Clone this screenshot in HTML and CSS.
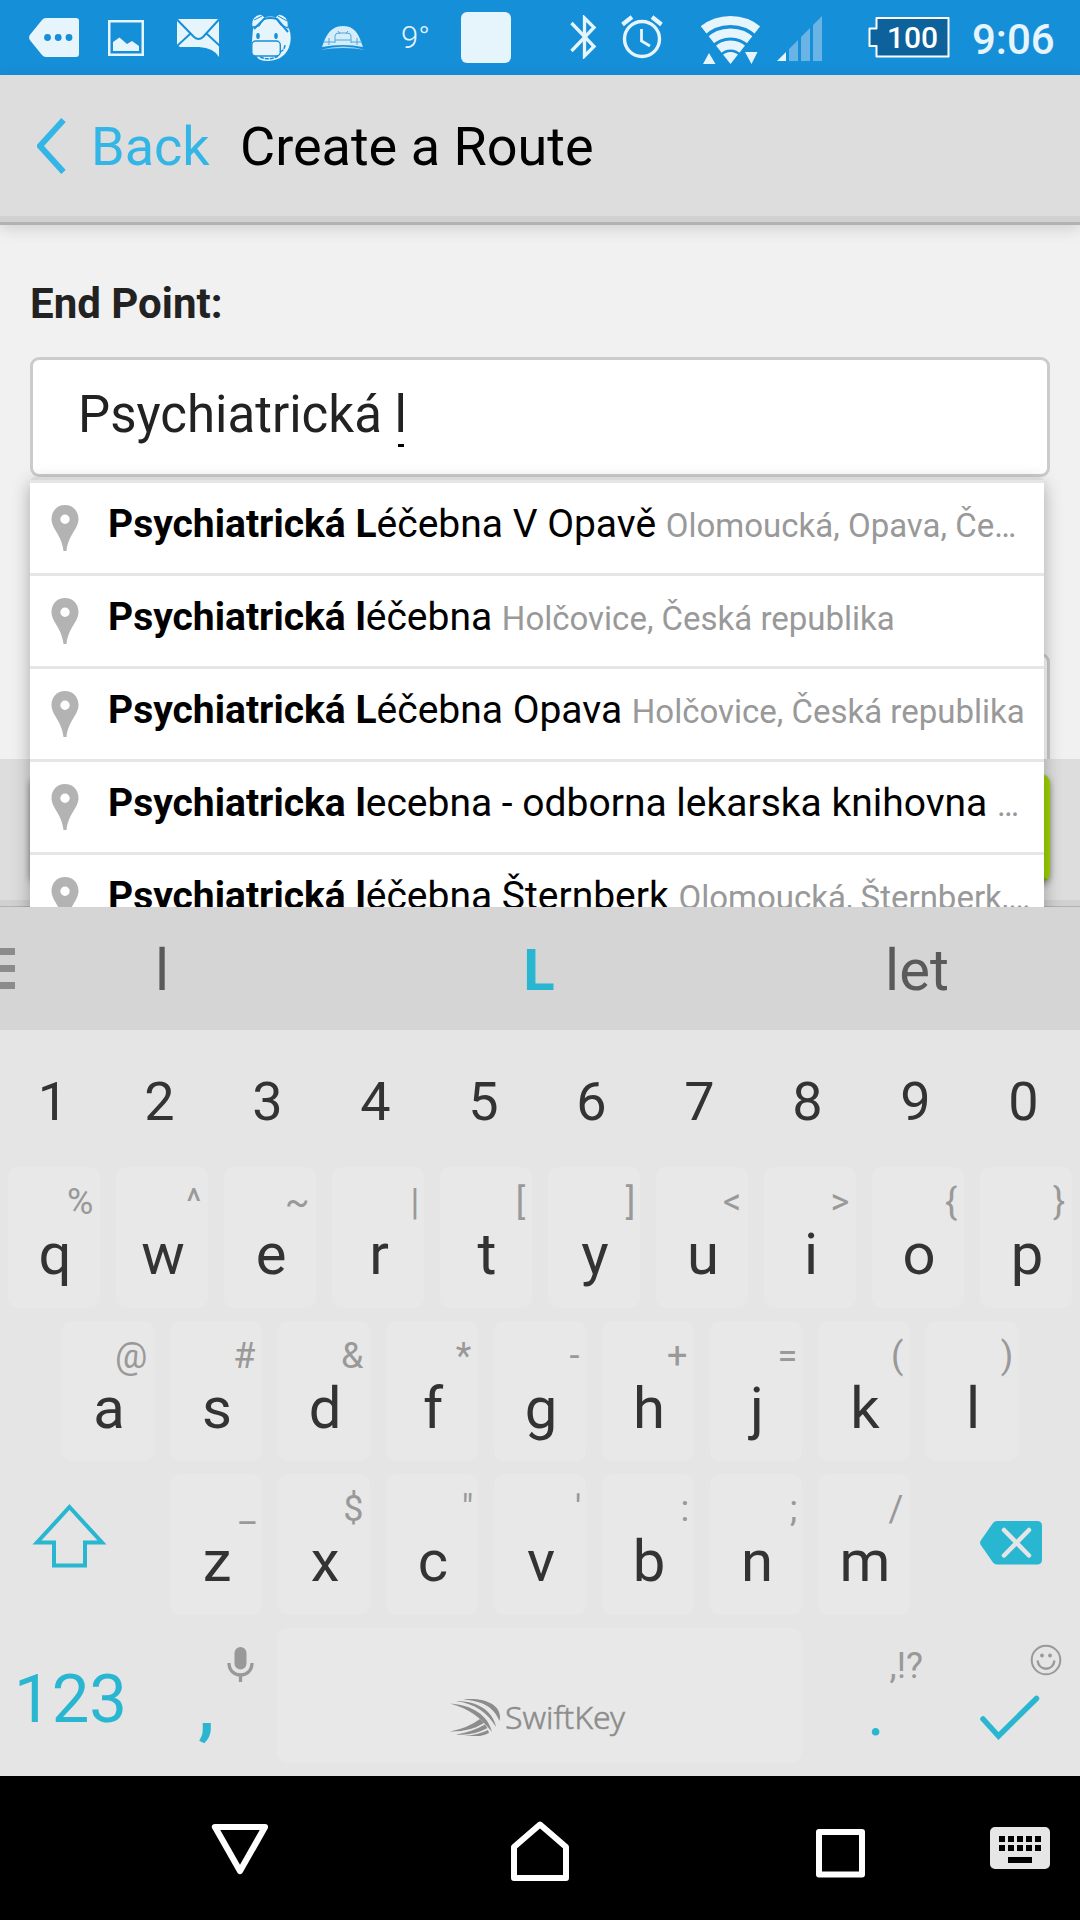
FILE: index.html
```html
<!DOCTYPE html>
<html lang="en">
<head>
<meta charset="utf-8">
<title>Create a Route</title>
<link rel="stylesheet" href="styles.css">
</head>
<body>
<div class="screen">
  <header class="status">
    <svg class="st-tag" width="50" height="40" viewBox="0 0 50 40"><path d="M13 2Q14.500 0 17 0H47Q50 0 50 3V36Q50 39 47 39H17Q14.500 39 13 37L.8 22Q-.6 19.500.8 17Z" fill="#e6f4fc"/><g fill="#168fd9"><circle cx="18.500" cy="19.500" r="3.400"/><circle cx="29.200" cy="19.500" r="3.400"/><circle cx="40" cy="19.500" r="3.400"/></g></svg>
    <svg class="st-pic" width="36" height="36" viewBox="0 0 36 36"><path d="M1.250 1.250H34.750V34.750H1.250Z" fill="none" stroke="#e6f4fc" stroke-width="2.500"/><path d="M5 31V22L11.500 17.500L19 24L24 21L31 26V31Z" fill="#e6f4fc"/></svg>
    <svg class="st-mail" width="43" height="40" viewBox="0 0 43 40"><path d="M0 1H42V39Q37 30 22 29H3L0 27Z" fill="#e6f4fc"/><path d="M0 1.500L17 19Q21.500 23 26 19L42 1.500M0 28L13.500 15.500M43 28L29.500 15.500" fill="none" stroke="#168fd9" stroke-width="2"/></svg>
    <svg class="st-hippo" width="41" height="50" viewBox="0 0 41 50"><path d="M5 8Q18 0 32 6Q42 17 39 31Q35 47 17 48Q8 48 6 44L3 41Q0 38 1 28L2 16Z" fill="#e6f4fc"/><path d="M1 14Q-1 3 10 1L14 4L8 13ZM37 15Q39 3 28 1L24 4L30 12Z" fill="#e6f4fc" stroke="#168fd9" stroke-width="1.200"/><path d="M3 16L13 6Q19 4 26 6L37 19" fill="none" stroke="#168fd9" stroke-width="2"/><path d="M3 7L11 3M36 8L27 3" stroke="#168fd9" stroke-width="1"/><rect x=".8" y="28" width="28.500" height="15" rx="4" fill="#e6f4fc" stroke="#168fd9" stroke-width="1.400"/><path d="M29 39Q34 37 34 31M9 44Q19 48 27 43" fill="none" stroke="#168fd9" stroke-width="1.500" stroke-dasharray="4 1"/><ellipse cx="7" cy="23" rx="1.800" ry="3" fill="#168fd9"/><ellipse cx="25" cy="23" rx="1.800" ry="3" fill="#168fd9"/></svg>
    <svg class="st-cap" width="46" height="26" viewBox="0 0 46 26"><path d="M5 13Q11 0 23 0Q35 0 40 13L43 21Q23 17 2 21Z" fill="#e6f4fc" opacity=".92"/><path d="M0 24Q23 17 46 24Q23 20 0 24Z" fill="#e6f4fc" opacity=".7"/><path d="M15 17V10Q15 7 19 7H27Q31 7 31 10V17M18 5L20 8M28 5L26 8M15 14H31M9 19V12M37 19V12M4 16H15M31 16H42" fill="none" stroke="#4fa9e0" stroke-width="1"/></svg>
    <span class="st-temp">9°</span>
    <span class="st-box"></span>
    <svg class="st-bt" width="28" height="44" viewBox="0 0 28 44"><path d="M1.500 8L24 31.500L14.500 41V3L24 12.500L1.500 36" fill="none" stroke="#e6f4fc" stroke-width="3.300"/></svg>
    <svg class="st-alarm" width="42" height="44" viewBox="0 0 42 44"><circle cx="21" cy="24" r="17.500" fill="none" stroke="#e6f4fc" stroke-width="3.400"/><path d="M20.500 14V26L29 31" fill="none" stroke="#e6f4fc" stroke-width="2.800"/><path d="M1.500 9.500L11 2M40.500 9.500L31 2" stroke="#e6f4fc" stroke-width="4.200"/></svg>
    <svg class="st-wifi" width="60" height="50" viewBox="0 0 60 50"><defs><clipPath id="fan"><path d="M29.500 48L-2 8V0H61V8Z"/></clipPath></defs><g clip-path="url(#fan)" fill="none" stroke="#e6f4fc"><circle cx="29.500" cy="48" r="43.500" stroke-width="9"/><circle cx="29.500" cy="48" r="31" stroke-width="9"/><circle cx="29.500" cy="48" r="19" stroke-width="9"/><circle cx="29.500" cy="48" r="6" stroke-width="12"/></g><path d="M2 48L8 37L14.500 48ZM44 36H56.500L50.500 48Z" fill="#e6f4fc"/></svg>
    <svg class="st-signal" width="46" height="46" viewBox="0 0 46 46"><path d="M0 45L9 36V45Z" fill="#e6f4fc"/><path d="M12 45V33L21 24V45ZM24 45V21L33 12V45ZM36 45V9L45 0V45Z" fill="#6ab4e5"/></svg>
    <span class="battery"><svg width="82" height="41" viewBox="0 0 82 41"><path d="M9 1H80.500V39.500H8.500V29H1.500V11.500H8.500V1Z" fill="#0e629b" stroke="#fff" stroke-width="2" stroke-linejoin="round"/></svg><b>100</b></span>
    <span class="clock">9:06</span>
  </header>

  <nav class="titlebar">
    <svg width="30" height="56" viewBox="0 0 30 56"><path d="M26.500 2L3 28L26.500 54" fill="none" stroke="#33b5e5" stroke-width="6"/></svg>
    <span class="back">Back</span>
    <h1>Create a Route</h1>
  </nav>

  <main class="form">
    <label class="label">End Point:</label>
    <div class="input">Psychiatrická <u>l</u></div>
    <div class="input second"></div>
    <footer class="actions"><span class="cancel"></span><span class="confirm"></span></footer>

    <ul class="suggest">
      <li><svg class="pin" width="28" height="48" viewBox="0 0 28 48"><path fill-rule="evenodd" d="M14 0C22 0 27.500 6 27.500 14C27.500 24 17 30 15.500 46H12.500C11 30 .5 24 .5 14C.5 6 6 0 14 0ZM14 9.500A4.700 4.700 0 1 0 14 18.900A4.700 4.700 0 1 0 14 9.500Z" fill="#b3b3b3"/></svg><p><b>Psychiatrická L</b>éčebna V Opavě <small>Olomoucká, Opava, Če…</small></p></li>
      <li><svg class="pin" width="28" height="48" viewBox="0 0 28 48"><path fill-rule="evenodd" d="M14 0C22 0 27.500 6 27.500 14C27.500 24 17 30 15.500 46H12.500C11 30 .5 24 .5 14C.5 6 6 0 14 0ZM14 9.500A4.700 4.700 0 1 0 14 18.900A4.700 4.700 0 1 0 14 9.500Z" fill="#b3b3b3"/></svg><p><b>Psychiatrická l</b>éčebna <small>Holčovice, Česká republika</small></p></li>
      <li><svg class="pin" width="28" height="48" viewBox="0 0 28 48"><path fill-rule="evenodd" d="M14 0C22 0 27.500 6 27.500 14C27.500 24 17 30 15.500 46H12.500C11 30 .5 24 .5 14C.5 6 6 0 14 0ZM14 9.500A4.700 4.700 0 1 0 14 18.900A4.700 4.700 0 1 0 14 9.500Z" fill="#b3b3b3"/></svg><p><b>Psychiatrická L</b>éčebna Opava <small>Holčovice, Česká republika</small></p></li>
      <li><svg class="pin" width="28" height="48" viewBox="0 0 28 48"><path fill-rule="evenodd" d="M14 0C22 0 27.500 6 27.500 14C27.500 24 17 30 15.500 46H12.500C11 30 .5 24 .5 14C.5 6 6 0 14 0ZM14 9.500A4.700 4.700 0 1 0 14 18.900A4.700 4.700 0 1 0 14 9.500Z" fill="#b3b3b3"/></svg><p><b>Psychiatricka l</b>ecebna - odborna lekarska knihovna <small>…</small></p></li>
      <li><svg class="pin" width="28" height="48" viewBox="0 0 28 48"><path fill-rule="evenodd" d="M14 0C22 0 27.500 6 27.500 14C27.500 24 17 30 15.500 46H12.500C11 30 .5 24 .5 14C.5 6 6 0 14 0ZM14 9.500A4.700 4.700 0 1 0 14 18.900A4.700 4.700 0 1 0 14 9.500Z" fill="#b3b3b3"/></svg><p><b>Psychiatrická l</b>éčebna Šternberk <small>Olomoucká, Šternberk,…</small></p></li>
    </ul>
  </main>

  <section class="predict">
    <span class="menu"><i></i><i></i><i></i></span>
    <span class="word">l</span><span class="word main">L</span><span class="word">let</span>
  </section>

  <section class="keyboard">
    <div class="numbers"><span>1</span><span>2</span><span>3</span><span>4</span><span>5</span><span>6</span><span>7</span><span>8</span><span>9</span><span>0</span></div>
    <div class="row">
      <span class="key"><i>%</i>q</span><span class="key"><i>^</i>w</span><span class="key"><i>~</i>e</span><span class="key near"><i>|</i>r</span><span class="key"><i>[</i>t</span><span class="key near"><i>]</i>y</span><span class="key"><i>&lt;</i>u</span><span class="key"><i>&gt;</i>i</span><span class="key"><i>{</i>o</span><span class="key"><i>}</i>p</span>
    </div>
    <div class="row">
      <span class="key"><i>@</i>a</span><span class="key"><i>#</i>s</span><span class="key"><i>&amp;</i>d</span><span class="key"><i>*</i>f</span><span class="key"><i>-</i>g</span><span class="key"><i>+</i>h</span><span class="key near"><i>=</i>j</span><span class="key"><i>(</i>k</span><span class="key near"><i>)</i>l</span>
    </div>
    <div class="row wide">
      <span class="shift"><svg width="76" height="66" viewBox="0 0 76 66"><path d="M37.500 4L70 39.500H53V62.500H22V39.500H5Z" fill="none" stroke="#29b6d0" stroke-width="4"/></svg></span>
      <span class="key"><i>_</i>z</span><span class="key"><i>$</i>x</span><span class="key near"><i>"</i>c</span><span class="key near"><i>'</i>v</span><span class="key near"><i>:</i>b</span><span class="key near"><i>;</i>n</span><span class="key"><i>/</i>m</span>
      <span class="erase"><svg width="62" height="44" viewBox="0 0 62 44"><path d="M13 2Q14.500 0 17 0H57Q62 0 62 5V38.500Q62 43.500 57 43.500H17Q14.500 43.500 13 41.500L.8 24Q-.6 21.700.8 19.500Z" fill="#29b6d0"/><path d="M24 9L49 34.500M49 9L24 34.500" stroke="#e5e5e5" stroke-width="4.500" stroke-linecap="round"/></svg></span>
    </div>
    <div class="row bottom">
      <span class="sym">123</span>
      <span class="comma"><svg width="28" height="38" viewBox="0 0 28 38"><rect x="7.500" y="1" width="12" height="22.500" rx="6" fill="#999"/><path d="M2 17C2 33 25 33 25 17M13.500 29V36" fill="none" stroke="#999" stroke-width="3.300"/></svg><b>,</b></span>
      <span class="space">
        <svg width="52" height="38" viewBox="0 0 52 38" fill="#8c8c8c"><path d="M0 5.500C22 7 38 17 42 34C31 20 20 11 0 5.500ZM6 3C28 3 43 13 46 29C37 14 25 6 6 3ZM13 1.500C38-1 53 9 49.500 23C43 8 32 3 13 1.500Z"/><path d="M0 33.500Q18 30 30 21L34 25Q20 34 0 33.500ZM6 36.500Q22 34 35 26.500L37.500 30Q23 38 6 36.500ZM14 38Q28 37 38 32L39 35Q30 40 14 38Z"/></svg>
        <span>SwiftKey</span>
      </span>
      <span class="period"><i>,!?</i><b>.</b></span>
      <span class="enter">
        <svg class="smile" width="32" height="32" viewBox="0 0 32 32" fill="none" stroke="#999" stroke-width="2"><circle cx="16" cy="16" r="14.300"/><path d="M7.500 16.500C9 27.500 23 27.500 24.500 16.500" stroke-width="2.300"/><g fill="#999" stroke="none"><circle cx="12" cy="11.500" r="1.900"/><circle cx="20" cy="11.500" r="1.900"/></g></svg>
        <svg class="check" width="62" height="46" viewBox="0 0 62 46"><path d="M3 24L18.500 41L56.500 3.500" fill="none" stroke="#29b6d0" stroke-width="5.500" stroke-linecap="round"/></svg>
      </span>
    </div>
  </section>

  <footer class="navbar">
    <svg class="nv-back" width="58" height="52" viewBox="0 0 58 52"><path d="M4 4H54L29 48Z" fill="none" stroke="#fff" stroke-width="6.200" stroke-linejoin="round"/></svg>
    <svg class="nv-home" width="60" height="62" viewBox="0 0 60 62"><path d="M4 58V27L30 4.500L56 27V58Z" fill="none" stroke="#fff" stroke-width="6" stroke-linejoin="round"/></svg>
    <svg class="nv-recent" width="50" height="50" viewBox="0 0 50 50"><rect x="4" y="4" width="43" height="42.500" fill="none" stroke="#fff" stroke-width="6" stroke-linejoin="round"/></svg>
    <svg class="nv-kb" width="60" height="42" viewBox="0 0 60 42"><rect width="60" height="42" rx="5" fill="#e6e6e6"/><path d="M9 12H51M9 21H51" stroke="#000" stroke-width="6" stroke-dasharray="6 3"/><path d="M18 33H42" stroke="#000" stroke-width="6"/></svg>
  </footer>
</div>
</body>
</html>
```
FILE: styles.css
```css
* { box-sizing: border-box; }
body { margin: 0; font-family: Roboto, "Noto Sans", sans-serif; }
svg { display: block; flex: none; }
h1, p, ul { margin: 0; padding: 0; }
i { font-style: normal; }

.screen { width: 1080px; height: 1920px; overflow: hidden; display: flex; flex-direction: column; background: #f1f1f1; }

/* status bar */
.status { height: 75px; flex: none; display: flex; align-items: flex-start; background: #168fd9; color: #e6f4fc; white-space: nowrap; }
.st-tag { margin: 18px 0 0 29px; }
.st-pic { margin: 20px 0 0 29px; }
.st-mail { margin: 18px 0 0 33px; }
.st-hippo { margin: 13px 0 0 31px; }
.st-cap { margin: 26px 0 0 28px; }
.st-temp { flex: none; width: 60px; margin-left: 35px; font-size: 31px; font-weight: 300; line-height: 75px; }
.st-box { flex: none; width: 50px; height: 51px; margin: 12px 0 0 0; border-radius: 6px; background: #e6f4fc; }
.st-bt { margin: 15px 0 0 59px; }
.st-alarm { margin: 15px 0 0 23px; }
.st-wifi { margin: 16px 0 0 38px; }
.st-signal { margin: 16px 0 0 16px; }
.battery { flex: none; display: grid; width: 82px; margin: 17px 0 0 45px; color: #fff; }
.battery > * { grid-area: 1 / 1; }
.battery b { padding-left: 19px; font-size: 30px; font-weight: 500; line-height: 41px; }
.clock { margin-left: 22px; font-size: 42px; font-weight: 500; line-height: 80px; }

/* title bar */
.titlebar { height: 150px; flex: none; display: flex; align-items: center; padding: 0 0 9px 37px; background: linear-gradient(#ddd 141px, #d1d1d1 141px, #d1d1d1 147px, #b2b2b2 147px); box-shadow: 0 3px 15px rgba(0,0,0,.15); font-size: 54px; line-height: 60px; position: relative; }
.back { width: 149px; margin-left: 24px; padding-top: 2px; color: #33b5e5; }
h1 { padding-top: 2px; font-size: 54px; font-weight: 400; color: #000; }

/* form */
.form { height: 682px; flex: none; position: relative; overflow: hidden; }
.label { display: block; height: 132px; padding: 47px 0 0 30px; font-size: 42px; font-weight: 700; line-height: 63px; color: #222; }
.input { width: 1020px; height: 120px; margin-left: 30px; border: 3px solid #ccc; border-radius: 9px; background: #fff; padding-left: 45px; font-size: 51px; line-height: 110px; color: #222; }
.input u { padding-bottom: 3px; text-decoration: none; background: linear-gradient(#000, #000) no-repeat 3px bottom / 6px 3px; }
.second { height: 140px; margin-top: 176px; }
.actions { position: relative; height: 148px; margin-top: -34px; display: flex; align-items: flex-start; justify-content: space-between; padding: 15px 30px 0; background: linear-gradient(#ddd 141px, #d1d1d1 141px, #d1d1d1 147px, #b2b2b2 147px); }
.actions span { width: 500px; height: 108px; border-radius: 9px; box-shadow: 0 3px 6px rgba(0,0,0,.4); }
.cancel { background: #ccc; }
.confirm { background: #9fd300; border: 3px solid #9fd300; border-bottom-color: #85ad00; }

/* autocomplete panel over the form */
.suggest { position: absolute; left: 30px; top: 252px; width: 1014px; height: 480px; list-style: none; background: #fff; border-top: 3px solid #d9d9d9; border-radius: 6px; box-shadow: 0 6px 18px rgba(0,0,0,.3); }
.suggest li { height: 93px; display: flex; align-items: flex-start; border-top: 3px solid #e6e6e6; padding-left: 21px; }
.pin { margin-top: 22px; }
.suggest p { margin-left: 29px; font-size: 39px; line-height: 82px; color: #000; white-space: nowrap; }
.suggest small { font-size: 33px; color: #999; }

/* word predictions */
.predict { height: 123px; flex: none; display: flex; align-items: center; background: #d5d5d5; font-size: 58px; line-height: 123px; color: #5a5a5a; }
.menu { width: 15px; display: flex; flex-direction: column; gap: 10px; }
.menu i { height: 7px; background: #8c8c8c; }
.word { width: 294px; padding-top: 3px; text-align: center; }
.word:last-child { padding-left: 2px; }
.main { width: 460px; color: #29b6d0; font-weight: 700; }

/* keyboard */
.keyboard { height: 746px; flex: none; background: #e5e5e5; color: #333; display: flex; flex-direction: column; }
.numbers { height: 137px; display: flex; font-size: 54px; line-height: 143px; }
.numbers span { width: 108px; padding-right: 5px; text-align: center; }
.numbers span:first-child { padding-right: 2px; }
.row { height: 140.600px; margin-bottom: 13px; display: flex; justify-content: center; gap: 15.300px; flex: none; }
.key { width: 92.700px; border-radius: 10px; background: #e8e8e8; display: flex; flex-direction: column; align-items: center; font-size: 58px; line-height: 35px; padding-left: 2px; }
.key i { align-self: flex-end; padding-right: 7px; font-size: 36px; line-height: 70px; color: #999; }
.near i { padding-right: 5px; }
.shift { width: 154px; padding: 29px 0 0 32px; }
.erase { width: 154px; padding: 47px 0 0 54px; }
.bottom { height: 135px; margin: 0; gap: 0; justify-content: flex-start; color: #29b6d0; }
.sym { width: 154px; padding-left: 14px; font-size: 67px; line-height: 142px; }
.comma { width: 123px; padding-left: 44px; }
.comma svg { margin: 18px 0 0 29px; }
.comma b { display: block; font-size: 68px; line-height: 48px; }
.space { width: 525px; border-radius: 10px; background: #e8e8e8; display: flex; align-items: flex-start; padding: 70px 0 0 173px; color: #8c8c8c; }
.space span { margin-left: 3px; font-family: "Noto Sans", sans-serif; font-size: 32px; font-weight: 300; line-height: 38px; -webkit-text-stroke: .5px #8c8c8c; }
.period { width: 121px; display: flex; flex-direction: column; }
.period i { align-self: flex-end; font-size: 36px; line-height: 76px; color: #999; }
.period b { padding-left: 65px; font-size: 68px; font-weight: 400; line-height: 16px; }
.enter { width: 157px; padding-left: 57px; }
.smile { margin: 16px 0 0 50px; }
.check { margin-top: 19px; }

/* system navigation */
.navbar { height: 144px; flex: none; display: flex; align-items: flex-start; background: #000; }
.nv-back { margin: 47px 0 0 211px; }
.nv-home { margin: 44px 0 0 241px; }
.nv-recent { margin: 52px 0 0 245px; }
.nv-kb { margin: 51px 0 0 125px; }
```
